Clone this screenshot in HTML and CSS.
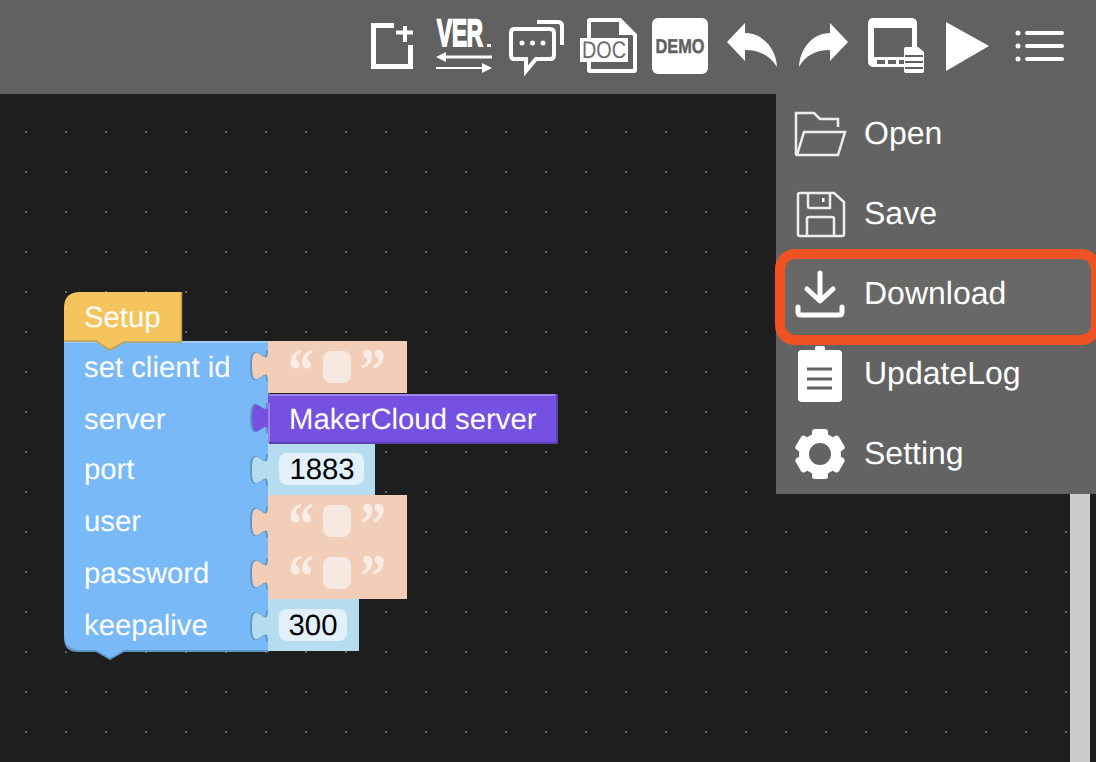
FILE: index.html
```html
<!DOCTYPE html>
<html lang="en">
<head>
  <meta charset="UTF-8" />
  <title>MakerCloud editor</title>
  <link rel="stylesheet" href="styles.css">
</head>
<body>

  <header class="toolbar">
    <!-- new file -->
    <svg class="tool" viewBox="0 0 56 56">
      <path class="line5" d="M30 7.5H9.5V48.5H46.500V27" />
      <path class="line4" d="M32 14.5H49M41 8V24" />
    </svg>
    <!-- version -->
    <svg class="tool" viewBox="0 0 56 56">
      <text class="ver" x="1" y="28" textLength="46" lengthAdjust="spacingAndGlyphs">VER</text>
      <rect class="fill" x="51" y="26" width="4" height="3" />
      <path class="line3" d="M6 39H56" />
      <path class="fill" d="M0 39L10 34V44Z" />
      <path class="line2" d="M0 50H50" />
      <path class="fill" d="M56 50L46 45V55Z" />
    </svg>
    <!-- comments -->
    <svg class="tool" viewBox="0 0 56 56">
      <path class="line4" d="M6 11H42Q46 11 46 15V37Q46 41 42 41H28L18 53V41H6Q3 41 3 37V15Q3 11 6 11Z" />
      <path class="line4" d="M29 4H50Q54 4 54 8V27" />
      <circle class="fill" cx="14" cy="25" r="2.500" />
      <circle class="fill" cx="24.500" cy="25" r="2.500" />
      <circle class="fill" cx="35" cy="25" r="2.500" />
    </svg>
    <!-- doc -->
    <svg class="tool" viewBox="0 0 56 56">
      <path class="line4" d="M9 24V3Q9 2 10 2H40L55 17V52Q55 53 54 53H10Q9 53 9 52V44" />
      <path class="fill" d="M39 2L55 17H39Z" />
      <rect class="fill" x="0" y="20" width="48" height="24" />
      <text class="doc" x="24" y="40" textLength="44" lengthAdjust="spacingAndGlyphs">DOC</text>
    </svg>
    <!-- demo -->
    <svg class="tool" viewBox="0 0 56 56">
      <rect class="fill" x="0" y="0" width="56" height="56" rx="6" />
      <text class="demo" x="28" y="35" textLength="49" lengthAdjust="spacingAndGlyphs">DEMO</text>
    </svg>
    <!-- undo -->
    <svg class="tool" viewBox="0 0 56 56">
      <path class="fill" d="M3 24L21 5V15C38 15 52 30 53 49C46 38 36 32 21 32V43Z" />
    </svg>
    <!-- redo -->
    <svg class="tool" viewBox="0 0 56 56">
      <path class="fill" d="M52 24L34 5V15C17 15 4 30 3 49C9 38 19 32 34 32V43Z" />
    </svg>
    <!-- video -->
    <svg class="tool" viewBox="0 0 56 56">
      <rect class="fill" x="0" y="0" width="49" height="49" rx="5" />
      <rect class="hole" x="6" y="10" width="38" height="29" />
      <rect class="hole" x="9" y="42" width="8" height="4" />
      <rect class="hole" x="20" y="42" width="8" height="4" />
      <rect class="hole" x="31" y="42" width="8" height="4" />
      <path class="fill" d="M38 29H50L56 34V53Q56 55 54 55H38Q36 55 36 53V31Q36 29 38 29Z" />
      <rect class="hole" x="37" y="37" width="18" height="2" />
      <rect class="hole" x="37" y="43" width="18" height="2" />
      <rect class="hole" x="37" y="49" width="18" height="2" />
    </svg>
    <!-- play -->
    <svg class="tool" viewBox="0 0 56 56">
      <path class="fill" d="M6 4L49 28L6 53Z" />
    </svg>
    <!-- list -->
    <svg class="tool" viewBox="0 0 56 56">
      <circle class="fill" cx="6" cy="15" r="2.500" />
      <circle class="fill" cx="6" cy="28" r="2.500" />
      <circle class="fill" cx="6" cy="41" r="2.500" />
      <path class="line4 round" d="M15 15H50M15 28H50M15 41H50" />
    </svg>
  </header>

  <main class="workspace">

    <svg class="blocks" viewBox="56 284 520 390">
      <defs>
        <path id="tab-edge" d="M268 381c0,-20 -16,16 -16,-15s16,5 16,-15" />
        <g id="quote-field">
          <text class="quote" x="288" y="391" textLength="26" lengthAdjust="spacingAndGlyphs">“</text>
          <rect class="field-text" x="323" y="351" width="28" height="32" rx="8" />
          <text class="quote" x="360" y="391" textLength="26" lengthAdjust="spacingAndGlyphs">”</text>
        </g>
      </defs>

      <!-- mqtt block -->
      <path class="mqtt-edge" d="M64 345V638Q64 652 78 652H96L110 660L124 652H269V342Z" />
      <path class="mqtt" d="M64 341H268V650H124L112 657Q110 658 108 657L96 650H80Q64 650 64 634Z" />
      <path class="mqtt-light" d="M64 342H268" />
      <text class="label" x="84" y="377">set client id</text>
      <text class="label" x="84" y="429">server</text>
      <text class="label" x="84" y="479">port</text>
      <text class="label" x="84" y="531">user</text>
      <text class="label" x="84" y="583">password</text>
      <text class="label" x="84" y="635">keepalive</text>

      <!-- setup hat -->
      <path class="setup" d="M64 341V308Q64 292 80 292H181V341H124L112 348Q110 349 108 348L96 341Z" />
      <path class="setup-edge" d="M181.500 292V342H124L112 349Q110 350 108 349L96 341H64" />
      <text class="label" x="84" y="327">Setup</text>

      <!-- set client id -->
      <use href="#tab-edge" class="tab-edge" />
      <path class="text-block" d="M268 341H407V393H268V381c0,-20 -16,16 -16,-15s16,5 16,-15Z" />
      <use href="#quote-field" />

      <!-- port -->
      <use href="#tab-edge" class="tab-edge" y="104" />
      <path class="number-block" d="M268 443H375V495H268V485c0,-20 -16,16 -16,-15s16,5 16,-15Z" />
      <rect class="field-number" x="279" y="453" width="85" height="32" rx="8" />
      <text class="num" x="322" y="479">1883</text>

      <!-- server -->
      <use href="#tab-edge" class="tab-edge" y="52" />
      <path class="server-edge" d="M269 394H558V444H269" />
      <path class="server" d="M268 394H556V442H268V433c0,-20 -16,16 -16,-15s16,5 16,-15Z" />
      <path class="server-light" d="M269 395H555M269 403V442" />
      <text class="label" x="289" y="429">MakerCloud server</text>

      <!-- user -->
      <use href="#tab-edge" class="tab-edge" y="156" />
      <path class="text-block" d="M268 495H407V547H268V537c0,-20 -16,16 -16,-15s16,5 16,-15Z" />
      <use href="#quote-field" y="154" />

      <!-- password -->
      <use href="#tab-edge" class="tab-edge" y="208" />
      <path class="text-block" d="M268 547H407V599H268V589c0,-20 -16,16 -16,-15s16,5 16,-15Z" />
      <use href="#quote-field" y="206" />

      <!-- keepalive -->
      <use href="#tab-edge" class="tab-edge" y="260" />
      <path class="number-block" d="M268 599H359V651H268V641c0,-20 -16,16 -16,-15s16,5 16,-15Z" />
      <rect class="field-number" x="279" y="609" width="68" height="32" rx="8" />
      <text class="num" x="313" y="635">300</text>
    </svg>

    <div class="scrollbar"></div>

    <nav class="menu">
      <a class="menu-item">
        <svg class="menu-icon" viewBox="0 0 56 56">
          <path class="line2 menu-line" d="M4 49V7H22L28 13H46V21" />
          <path class="line2 menu-line" d="M5 49H46L53 26H12Z" />
        </svg>
        <span class="menu-text">Open</span>
      </a>
      <a class="menu-item">
        <svg class="menu-icon" viewBox="0 0 56 56">
          <path class="line2 menu-line" d="M8 7H42L52 16V48Q52 50 50 50H8Q6 50 6 48V9Q6 7 8 7Z" />
          <path class="line2 menu-line" d="M16 7V20Q16 22 18 22H38V7M15 50V33Q15 31 17 31H40Q42 31 42 33V50" />
          <rect class="fill" x="30" y="12" width="2.500" height="4" />
        </svg>
        <span class="menu-text">Save</span>
      </a>
      <a class="menu-item is-active">
        <svg class="menu-icon" viewBox="0 0 56 56">
          <path class="line5 round" d="M28 7V34M15 23L28 35L41 23" />
          <path class="line5 round" d="M6 41V46Q6 49 9 49H47Q50 49 50 46V41" />
        </svg>
        <span class="menu-text">Download</span>
      </a>
      <a class="menu-item">
        <svg class="menu-icon" viewBox="0 0 56 56">
          <rect class="fill" x="6" y="4" width="44" height="52" rx="4" />
          <rect class="fill" x="23" y="0" width="10" height="8" rx="2" />
          <path class="menu-hole" d="M15 23H40M15 33H40M15 42H40" />
        </svg>
        <span class="menu-text">UpdateLog</span>
      </a>
      <a class="menu-item">
        <svg class="menu-icon" viewBox="0 0 56 56">
          <circle class="gear" cx="28" cy="28" r="16" />
          <g class="fill">
            <rect x="20" y="3" width="16" height="10" rx="3" />
            <rect x="20" y="3" width="16" height="10" rx="3" transform="rotate(60 28 28)" />
            <rect x="20" y="3" width="16" height="10" rx="3" transform="rotate(120 28 28)" />
            <rect x="20" y="3" width="16" height="10" rx="3" transform="rotate(180 28 28)" />
            <rect x="20" y="3" width="16" height="10" rx="3" transform="rotate(240 28 28)" />
            <rect x="20" y="3" width="16" height="10" rx="3" transform="rotate(300 28 28)" />
          </g>
        </svg>
        <span class="menu-text">Setting</span>
      </a>
    </nav>

    <div class="highlight"></div>
  </main>

</body>
</html>
```

FILE: styles.css
```css
html, body {
  margin: 0;
  height: 100%;
  overflow: hidden;
}

body {
  font-family: "Liberation Sans", Arial, sans-serif;
  text-rendering: geometricPrecision;
  background-color: #1e1e1e;
  display: flex;
  flex-direction: column;
}

.toolbar {
  height: 56px;
  padding: 18px 28px 20px 0;
  background-color: #616161;
  display: flex;
  justify-content: flex-end;
  gap: 16px;
  flex: none;
}

.tool {
  width: 56px;
  height: 56px;
  overflow: visible;
}

.fill { fill: #fff; }
.hole { fill: #616161; }

.line2, .line3, .line4, .line5 {
  fill: none;
  stroke: #fff;
}
.line2 { stroke-width: 2; }
.line3 { stroke-width: 3; }
.line4 { stroke-width: 4; }
.line5 { stroke-width: 5; }
.round { stroke-linecap: round; stroke-linejoin: round; }

.ver {
  font-size: 38px;
  font-weight: bold;
  fill: #fff;
  stroke: #fff;
  stroke-width: 2;
}

.doc {
  font-size: 24px;
  text-anchor: middle;
  fill: #6a6a6a;
}

.demo {
  font-size: 20px;
  font-weight: bold;
  text-anchor: middle;
  fill: #616161;
  stroke: #616161;
  stroke-width: 0.500;
}

/* workspace */
.workspace {
  position: relative;
  flex: 1;
  background-color: #1e1e1e;
  background-image: radial-gradient(circle at 1px 1px, #666 1px, transparent 1.500px);
  background-size: 40px 40px;
  background-position: 25px 37px;
}

.blocks {
  position: absolute;
  left: 56px;
  top: 190px;
  width: 520px;
  height: 390px;
}

.label, .num {
  font-size: 29.300px;
  fill: #fff;
}

.num {
  fill: #000;
  text-anchor: middle;
}

.quote {
  font-family: "Liberation Serif", serif;
  font-size: 62px;
  font-weight: bold;
  fill: #f9ede5;
}

.setup { fill: #f5c45c; }
.setup-edge { fill: none; stroke: #c49d4a; stroke-width: 1.500; }
.mqtt { fill: #79b9f8; }
.mqtt-edge { fill: #5e94c6; }
.mqtt-light { fill: none; stroke: #a1cffb; stroke-width: 2; }
.tab-edge { fill: none; stroke: #5e94c6; stroke-width: 2; transform: translateX(-1px); }
.text-block { fill: #f2cdb8; }
.number-block { fill: #b6dcef; }
.field-text { fill: #f7e9e1; }
.field-number { fill: #e1f0fa; }
.server { fill: #7650e0; }
.server-edge { fill: #5e40b3; }
.server-light { fill: none; stroke: #9f85e9; stroke-width: 2; }

.scrollbar {
  position: absolute;
  right: 6px;
  top: 0;
  bottom: 0;
  width: 20px;
  background-color: #ccc;
}

/* menu */
.menu {
  position: absolute;
  right: 0;
  top: 0;
  width: 320px;
  background-color: #636363;
  display: flex;
  flex-direction: column;
}

.menu-item {
  height: 80px;
  padding-left: 16px;
  display: flex;
  align-items: center;
  gap: 16px;
  font-size: 32px;
  color: #fff;
}

.menu-item.is-active {
  background-color: #686866;
}

.menu-text {
  margin-bottom: 2px;
}

.menu-icon {
  width: 56px;
  height: 56px;
  overflow: visible;
}

.menu-line { stroke: #eee; stroke-width: 2.500; }
.menu-hole { fill: none; stroke: #636363; stroke-width: 3; }
.gear { fill: none; stroke: #fff; stroke-width: 10; }

.highlight {
  position: absolute;
  right: -5px;
  top: 155px;
  width: 326px;
  height: 96px;
  box-sizing: border-box;
  border: 10px solid #f05323;
  border-radius: 20px;
}
```
